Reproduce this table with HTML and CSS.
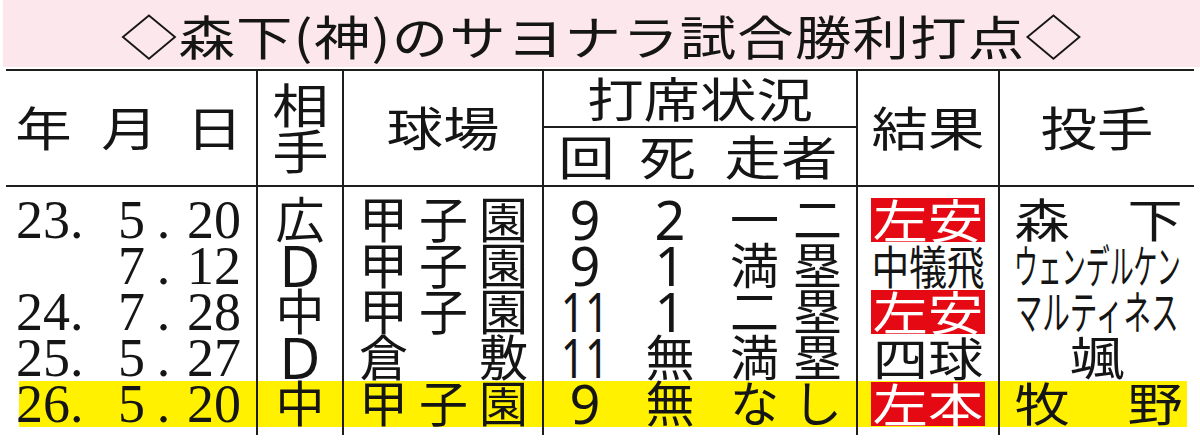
FILE: index.html
```html
<!DOCTYPE html>
<html lang="ja">
<head>
<meta charset="utf-8">
<title>森下（神）のサヨナラ試合勝利打点</title>
<link rel="stylesheet" href="styles.css">
</head>
<body>
<div class="page">
  <h1 class="title"><span class="sx120">◇森下(神)のサヨナラ試合勝利打点◇</span></h1>
  <div class="table">
    <div class="thead cols">
      <div class="th th-date"><span class="sx120">年</span><span class="sx120">月</span><span class="sx120">日</span></div>
      <div class="th th-opp"><span class="sx120">相</span><span class="sx120">手</span></div>
      <div class="th"><span class="sx120">球場</span></div>
      <div class="th th-sit">
        <div class="sit-top"><span class="sx120">打席状況</span></div>
        <div class="sit-bottom">
          <span class="sub"><span class="sx120">回</span></span>
          <span class="sub"><span class="sx120">死</span></span>
          <span class="sub"><span class="sx120">走者</span></span>
        </div>
      </div>
      <div class="th"><span class="sx120">結果</span></div>
      <div class="th"><span class="sx120">投手</span></div>
    </div>

    <div class="tbody">
      <div class="row cols">
        <div class="td td-date"><span class="y">23.</span><span class="m">5</span><span class="dot">.</span><span class="d">20</span></div>
        <div class="td">広</div>
        <div class="td td-park"><span>甲</span><span>子</span><span>園</span></div>
        <div class="td td-sit"><span class="inn num">9</span><span class="out num">2</span><span class="run"><span>一</span><span>二</span></span></div>
        <div class="td"><span class="res badge"><span class="sx120">左安</span></span></div>
        <div class="td td-pit"><span class="sx120">森</span><span class="sx120">下</span></div>
      </div>
      <div class="row cols">
        <div class="td td-date"><span class="y"></span><span class="m">7</span><span class="dot">.</span><span class="d">12</span></div>
        <div class="td"><span class="latin">D</span></div>
        <div class="td td-park"><span>甲</span><span>子</span><span>園</span></div>
        <div class="td td-sit"><span class="inn num">9</span><span class="out num">1</span><span class="run"><span>満</span><span>塁</span></span></div>
        <div class="td"><span class="res"><span class="sx082">中犠飛</span></span></div>
        <div class="td td-pit-c"><span class="kana sx052">ウェンデルケン</span></div>
      </div>
      <div class="row cols">
        <div class="td td-date"><span class="y">24.</span><span class="m">7</span><span class="dot">.</span><span class="d">28</span></div>
        <div class="td">中</div>
        <div class="td td-park"><span>甲</span><span>子</span><span>園</span></div>
        <div class="td td-sit"><span class="inn num"><span class="sx078">11</span></span><span class="out num">1</span><span class="run"><span>二</span><span>塁</span></span></div>
        <div class="td"><span class="res badge"><span class="sx120">左安</span></span></div>
        <div class="td td-pit-c"><span class="kana sx060">マルティネス</span></div>
      </div>
      <div class="row cols">
        <div class="td td-date"><span class="y">25.</span><span class="m">5</span><span class="dot">.</span><span class="d">27</span></div>
        <div class="td"><span class="latin">D</span></div>
        <div class="td td-park"><span>倉</span><span>敷</span></div>
        <div class="td td-sit"><span class="inn num"><span class="sx078">11</span></span><span class="out">無</span><span class="run"><span>満</span><span>塁</span></span></div>
        <div class="td"><span class="res"><span class="sx120">四球</span></span></div>
        <div class="td td-pit-c"><span class="kanji sx120">颯</span></div>
      </div>
      <div class="row cols hl">
        <div class="td td-date"><span class="y">26.</span><span class="m">5</span><span class="dot">.</span><span class="d">20</span></div>
        <div class="td">中</div>
        <div class="td td-park"><span>甲</span><span>子</span><span>園</span></div>
        <div class="td td-sit"><span class="inn num">9</span><span class="out">無</span><span class="run"><span>な</span><span>し</span></span></div>
        <div class="td"><span class="res badge"><span class="sx120">左本</span></span></div>
        <div class="td td-pit"><span class="sx120">牧</span><span class="sx120">野</span></div>
      </div>
    </div>
  </div>
</div>
</body>
</html>
```

FILE: styles.css
```css
* { box-sizing: border-box; }

html, body {
  margin: 0;
  padding: 0;
  background: #ffffff;
}

body {
  width: 1200px;
  height: 441px;
  overflow: hidden;
  font-family: "Noto Sans CJK JP", "Noto Sans", sans-serif;
  font-weight: 400;
  color: #151515;
}

.sx120, .sx082, .sx078, .sx052, .sx060 {
  display: inline-block;
  transform-origin: center;
  white-space: nowrap;
}
.sx120 { transform: scaleX(1.2); }
.sx082 { transform: scaleX(0.82); }
.sx078 { transform: scaleX(0.78); }
.sx060 { transform: scaleX(0.6); }
.sx052 { transform: scaleX(0.52); }

/* title band */
.title {
  margin: 0 0 2px 3px;
  height: 67px;
  padding-top: 3px;
  background: #fce7ec;
  font-size: 47px;
  line-height: 64px;
  font-weight: 400;
  letter-spacing: 1px;
  text-align: center;
  white-space: nowrap;
}

/* table */
.table {
  margin-left: 6px;
  width: 1188px;
  border-top: 2px solid #1e1e1e;
}

.cols {
  display: grid;
  grid-template-columns: 252px 86px 200px 314px 142px 194px;
}

/* header */
.thead {
  height: 116px;
  border-bottom: 2px solid #1e1e1e;
}

.th {
  border-right: 2px solid #1e1e1e;
  display: flex;
  align-items: center;
  justify-content: center;
  padding-bottom: 5px;
  font-size: 47px;
  line-height: 47px;
}
.th:last-child { border-right: 0; }

.th-date {
  justify-content: space-between;
  padding: 0 18px 5px 14px;
}

.th-opp {
  flex-direction: column;
  line-height: 46px;
}

.th-sit {
  flex-direction: column;
  align-items: stretch;
  justify-content: flex-start;
  padding: 0;
}

.sit-top {
  height: 57px;
  border-bottom: 2px solid #1e1e1e;
  display: flex;
  align-items: center;
  justify-content: center;
  padding-bottom: 5px;
}

.sit-bottom {
  flex: 1;
  display: grid;
  grid-template-columns: 84px 78px 1fr;
  align-items: center;
  padding-bottom: 5px;
}

.sub {
  display: flex;
  justify-content: center;
}

/* body */
.td {
  box-sizing: content-box;
  height: 46px;
  border-right: 2px solid #1e1e1e;
  display: flex;
  align-items: flex-start;
  justify-content: center;
  font-size: 49px;
  line-height: 40px;
  white-space: nowrap;
}
.td:last-child { border-right: 0; }

.row:first-child .td { padding-top: 10px; }
.row:last-child .td { padding-bottom: 8px; }

.hl .td {
  background: linear-gradient(#fff100, #fff100) left top / 100% 46px no-repeat;
}
.hl .td:first-child {
  background-position: right top;
  background-size: calc(100% - 13px) 46px;
}
.hl .td:last-child {
  background-position: left top;
  background-size: calc(100% - 7px) 46px;
}

.td-date {
  display: grid;
  grid-template-columns: 84px 45px 37px 59px;
  justify-content: start;
  align-items: start;
  padding-left: 10px;
  font-family: "Liberation Serif", "Times New Roman", serif;
  font-weight: 400;
  font-size: 54px;
  line-height: 46px;
}
.td-date .y { text-align: left; }
.td-date .m { text-align: right; }
.td-date .dot { text-align: center; }
.td-date .d { text-align: right; }

.latin {
  font-family: "Noto Sans", sans-serif;
  font-weight: 400;
  font-size: 56px;
  line-height: 40px;
  margin-top: 2px;
}

.td-park {
  justify-content: space-between;
  padding-left: 15px;
  padding-right: 14px;
}

.td-sit {
  display: grid;
  grid-template-columns: 82px 88px 1fr;
  align-items: start;
  justify-content: stretch;
}
.td-sit .inn, .td-sit .out { text-align: center; }
.num {
  font-family: "Noto Sans", sans-serif;
  font-weight: 400;
  font-size: 54px;
  line-height: 40px;
  margin-top: 2px;
}
.run {
  display: flex;
  justify-content: space-between;
  width: 112px;
  margin-left: 16px;
}

.res {
  width: 114px;
  height: 44px;
  margin-top: 1px;
  display: flex;
  align-items: center;
  justify-content: center;
  font-size: 46px;
  line-height: 44px;
  padding-bottom: 5px;
}
.badge {
  background: #e50914;
  color: #ffffff;
}

.td-pit {
  justify-content: space-between;
  padding-left: 19px;
  padding-right: 16px;
  font-size: 46px;
}
.td-pit-c {
  font-size: 46px;
}
```
